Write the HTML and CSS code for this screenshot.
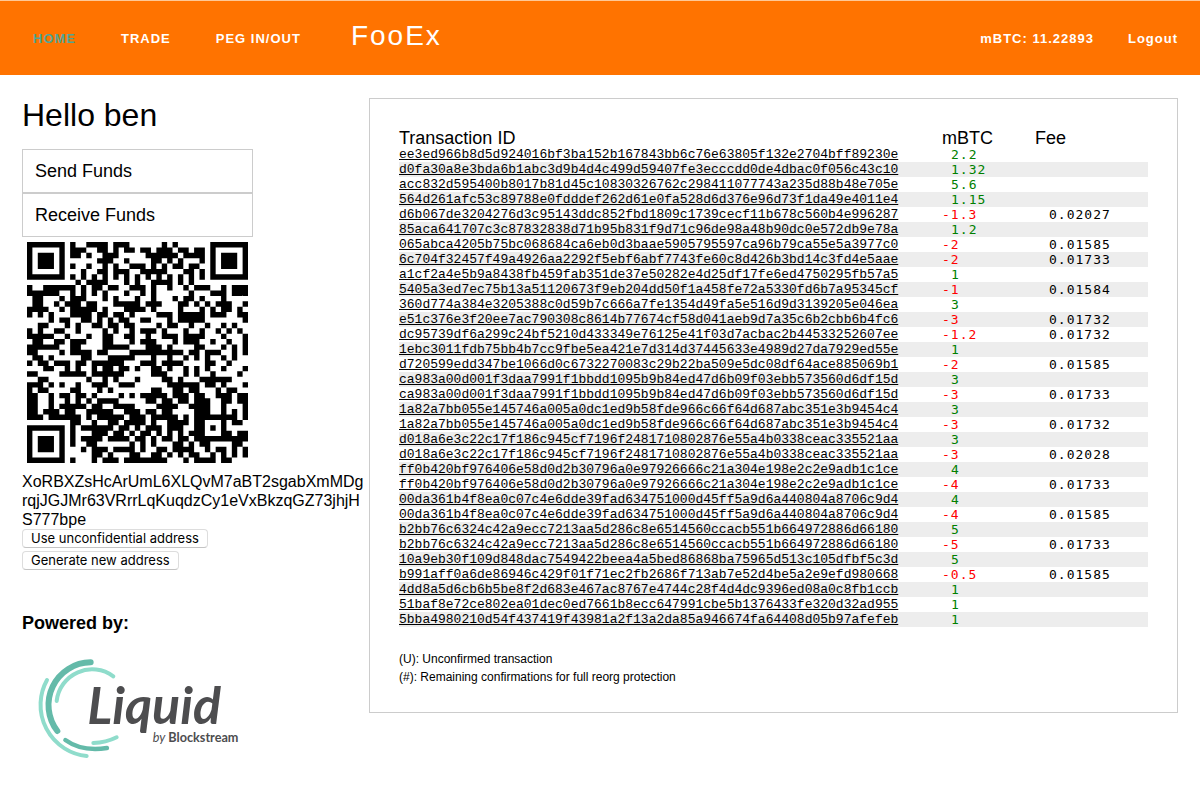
FILE: index.html
```html
<!DOCTYPE html>
<html lang="en">
<head>
    <meta charset="UTF-8">
    <meta name="viewport" content="width=device-width, initial-scale=1.0">
    <title>FooEx</title>
    <link rel="stylesheet" href="styles.css">
</head>
<body>

<header class="topbar">
    <nav class="menu">
        <a class="active" href="#">HOME</a>
        <a href="#">TRADE</a>
        <a href="#">PEG IN/OUT</a>
    </nav>
    <div class="brand">FooEx</div>
    <div class="account">
        <span>mBTC: 11.22893</span>
        <a href="#">Logout</a>
    </div>
</header>

<main class="content">
    <section class="wallet">
        <h1>Hello ben</h1>
        <div class="actions">
            <a href="#">Send Funds</a>
            <a href="#">Receive Funds</a>
        </div>

        <svg class="qr" viewBox="0 0 41 41" role="img" aria-label="Address QR code"><path id="qr-modules"></path></svg>
        <div class="address" id="address">XoRBXZsHcArUmL6XLQvM7aBT2sgabXmMDg<wbr>rqjJGJMr63VRrrLqKuqdzCy1eVxBkzqGZ73jhjH<wbr>S777bpe</div>
        <div class="address-buttons">
            <button type="button">Use unconfidential address</button>
            <button type="button">Generate new address</button>
        </div>

        <h2>Powered by:</h2>
        <svg class="liquid" viewBox="66 570 660 320" role="img" aria-label="Liquid by Blockstream">
            <g fill="none" stroke-linecap="round">
                <g stroke="#8fdccb" stroke-width="12">
                    <path d="M141 645A154 154 0 0 0 260 873"/>
                    <path d="M170 708A107 107 0 0 1 340 634"/>
                    <path d="M280 834Q318 833 350 817"/>
                </g>
                <g stroke="#64baa9" stroke-width="18">
                    <path d="M272 592A128 128 0 0 0 172 798"/>
                    <path d="M196 825Q246 861 321 849" stroke-width="13"/>
                </g>
            </g>
            <text class="liquid-name" x="262" y="777">Liquid</text>
            <text class="liquid-by" x="458" y="830"><tspan class="by">by</tspan> Blockstream</text>
        </svg>
    </section>

    <section class="history">
        <table>
            <thead>
                <tr><th>Transaction ID</th><th class="amount-col">mBTC</th><th class="fee-col">Fee</th></tr>
            </thead>
            <tbody>
                <tr><td class="txid"><a href="#">ee3ed966b8d5d924016bf3ba152b167843bb6c76e63805f132e2704bff89230e</a></td><td class="in">2.2</td><td></td></tr>
                <tr><td class="txid"><a href="#">d0fa30a8e3bda6b1abc3d9b4d4c499d59407fe3ecccdd0de4dbac0f056c43c10</a></td><td class="in">1.32</td><td></td></tr>
                <tr><td class="txid"><a href="#">acc832d595400b8017b81d45c10830326762c298411077743a235d88b48e705e</a></td><td class="in">5.6</td><td></td></tr>
                <tr><td class="txid"><a href="#">564d261afc53c89788e0fdddef262d61e0fa528d6d376e96d73f1da49e4011e4</a></td><td class="in">1.15</td><td></td></tr>
                <tr><td class="txid"><a href="#">d6b067de3204276d3c95143ddc852fbd1809c1739cecf11b678c560b4e996287</a></td><td class="out">-1.3</td><td class="fee">0.02027</td></tr>
                <tr><td class="txid"><a href="#">85aca641707c3c87832838d71b95b831f9d71c96de98a48b90dc0e572db9e78a</a></td><td class="in">1.2</td><td></td></tr>
                <tr><td class="txid"><a href="#">065abca4205b75bc068684ca6eb0d3baae5905795597ca96b79ca55e5a3977c0</a></td><td class="out">-2</td><td class="fee">0.01585</td></tr>
                <tr><td class="txid"><a href="#">6c704f32457f49a4926aa2292f5ebf6abf7743fe60c8d426b3bd14c3fd4e5aae</a></td><td class="out">-2</td><td class="fee">0.01733</td></tr>
                <tr><td class="txid"><a href="#">a1cf2a4e5b9a8438fb459fab351de37e50282e4d25df17fe6ed4750295fb57a5</a></td><td class="in">1</td><td></td></tr>
                <tr><td class="txid"><a href="#">5405a3ed7ec75b13a51120673f9eb204dd50f1a458fe72a5330fd6b7a95345cf</a></td><td class="out">-1</td><td class="fee">0.01584</td></tr>
                <tr><td class="txid"><a href="#">360d774a384e3205388c0d59b7c666a7fe1354d49fa5e516d9d3139205e046ea</a></td><td class="in">3</td><td></td></tr>
                <tr><td class="txid"><a href="#">e51c376e3f20ee7ac790308c8614b77674cf58d041aeb9d7a35c6b2cbb6b4fc6</a></td><td class="out">-3</td><td class="fee">0.01732</td></tr>
                <tr><td class="txid"><a href="#">dc95739df6a299c24bf5210d433349e76125e41f03d7acbac2b44533252607ee</a></td><td class="out">-1.2</td><td class="fee">0.01732</td></tr>
                <tr><td class="txid"><a href="#">1ebc3011fdb75bb4b7cc9fbe5ea421e7d314d37445633e4989d27da7929ed55e</a></td><td class="in">1</td><td></td></tr>
                <tr><td class="txid"><a href="#">d720599edd347be1066d0c6732270083c29b22ba509e5dc08df64ace885069b1</a></td><td class="out">-2</td><td class="fee">0.01585</td></tr>
                <tr><td class="txid"><a href="#">ca983a00d001f3daa7991f1bbdd1095b9b84ed47d6b09f03ebb573560d6df15d</a></td><td class="in">3</td><td></td></tr>
                <tr><td class="txid"><a href="#">ca983a00d001f3daa7991f1bbdd1095b9b84ed47d6b09f03ebb573560d6df15d</a></td><td class="out">-3</td><td class="fee">0.01733</td></tr>
                <tr><td class="txid"><a href="#">1a82a7bb055e145746a005a0dc1ed9b58fde966c66f64d687abc351e3b9454c4</a></td><td class="in">3</td><td></td></tr>
                <tr><td class="txid"><a href="#">1a82a7bb055e145746a005a0dc1ed9b58fde966c66f64d687abc351e3b9454c4</a></td><td class="out">-3</td><td class="fee">0.01732</td></tr>
                <tr><td class="txid"><a href="#">d018a6e3c22c17f186c945cf7196f2481710802876e55a4b0338ceac335521aa</a></td><td class="in">3</td><td></td></tr>
                <tr><td class="txid"><a href="#">d018a6e3c22c17f186c945cf7196f2481710802876e55a4b0338ceac335521aa</a></td><td class="out">-3</td><td class="fee">0.02028</td></tr>
                <tr><td class="txid"><a href="#">ff0b420bf976406e58d0d2b30796a0e97926666c21a304e198e2c2e9adb1c1ce</a></td><td class="in">4</td><td></td></tr>
                <tr><td class="txid"><a href="#">ff0b420bf976406e58d0d2b30796a0e97926666c21a304e198e2c2e9adb1c1ce</a></td><td class="out">-4</td><td class="fee">0.01733</td></tr>
                <tr><td class="txid"><a href="#">00da361b4f8ea0c07c4e6dde39fad634751000d45ff5a9d6a440804a8706c9d4</a></td><td class="in">4</td><td></td></tr>
                <tr><td class="txid"><a href="#">00da361b4f8ea0c07c4e6dde39fad634751000d45ff5a9d6a440804a8706c9d4</a></td><td class="out">-4</td><td class="fee">0.01585</td></tr>
                <tr><td class="txid"><a href="#">b2bb76c6324c42a9ecc7213aa5d286c8e6514560ccacb551b664972886d66180</a></td><td class="in">5</td><td></td></tr>
                <tr><td class="txid"><a href="#">b2bb76c6324c42a9ecc7213aa5d286c8e6514560ccacb551b664972886d66180</a></td><td class="out">-5</td><td class="fee">0.01733</td></tr>
                <tr><td class="txid"><a href="#">10a9eb30f109d848dac7549422beea4a5bed86868ba75965d513c105dfbf5c3d</a></td><td class="in">5</td><td></td></tr>
                <tr><td class="txid"><a href="#">b991aff0a6de86946c429f01f71ec2fb2686f713ab7e52d4be5a2e9efd980668</a></td><td class="out">-0.5</td><td class="fee">0.01585</td></tr>
                <tr><td class="txid"><a href="#">4dd8a5d6cb6b5be8f2d683e467ac8767e4744c28f4d4dc9396ed08a0c8fb1ccb</a></td><td class="in">1</td><td></td></tr>
                <tr><td class="txid"><a href="#">51baf8e72ce802ea01dec0ed7661b8ecc647991cbe5b1376433fe320d32ad955</a></td><td class="in">1</td><td></td></tr>
                <tr><td class="txid"><a href="#">5bba4980210d54f437419f43981a2f13a2da85a946674fa64408d05b97afefeb</a></td><td class="in">1</td><td></td></tr>
            </tbody>
        </table>
        <div class="legend">
            <p>(U): Unconfirmed transaction</p>
            <p>(#): Remaining confirmations for full reorg protection</p>
        </div>
    </section>
</main>

<script src="qr.js"></script>
</body>
</html>
```
FILE: styles.css
```css
* {
    box-sizing: border-box;
}
body {
    margin: 0;
    background-color: #fff;
    color: #000;
    font-family: "Liberation Sans", Arial, sans-serif;
    font-size: 16px;
}
a {
    color: inherit;
    text-decoration: none;
}
h1, h2, p {
    margin: 0;
    font-weight: normal;
}
.topbar {
    display: flex;
    align-items: center;
    height: 75px;
    padding: 0 22px 0 33px;
    border-top: 1px solid #ffc896;
    background-color: #ff7300;
    color: #fff;
    font-size: 13px;
    font-weight: bold;
    letter-spacing: 1px;
}
.menu {
    display: flex;
    gap: 45px;
}
.menu .active {
    color: #52a595;
}
.brand {
    margin-left: 50px;
    padding-bottom: 4px;
    font-size: 28px;
    font-weight: normal;
    letter-spacing: 2px;
}
.account {
    display: flex;
    gap: 34px;
    margin-left: auto;
}
.content {
    display: flex;
    align-items: flex-start;
    padding: 23px 22px;
}
.wallet {
    flex: none;
    width: 347px;
}
.wallet h1 {
    margin-bottom: 17px;
    font-size: 32px;
    line-height: 34px;
}
.actions {
    width: 231px;
}
.actions a {
    display: block;
    padding: 0 12px;
    border: 1px solid #ccc;
    font-size: 18px;
    line-height: 42px;
}
.qr {
    display: block;
    width: 221px;
    margin: 5px 5px 9px;
}
.address {
    line-height: 19px;
}
.address-buttons {
    display: flex;
    flex-direction: column;
    align-items: flex-start;
    gap: 3px;
}
.address-buttons button {
    padding: 0 8px;
    border: 1px solid #ddd;
    border-bottom-color: #c4c4c4;
    border-radius: 4px;
    background-color: #fff;
    color: #000;
    font-family: Inter, sans-serif;
    font-size: 13px;
    line-height: 17px;
}
.wallet h2 {
    margin: 43px 0 22px;
    font-size: 18px;
    font-weight: bold;
    line-height: 20px;
}
.liquid {
    display: block;
    width: 220px;
}
.liquid text {
    fill: #4d4d4f;
    font-family: Lato, sans-serif;
    font-weight: bold;
}
.liquid-name {
    font-size: 156px;
    font-style: italic;
}
.liquid .liquid-by {
    font-size: 38px;
}
.by {
    font-style: italic;
    font-weight: normal;
}
.history {
    flex: 1;
    padding: 30px 29px 26px;
    border: 1px solid #ccc;
}
.history table {
    width: 100%;
    table-layout: fixed;
    border-collapse: collapse;
}
.history th {
    padding: 0;
    font-size: 18px;
    font-weight: normal;
    line-height: 18px;
    text-align: left;
}
.amount-col {
    width: 93px;
}
.fee-col {
    width: 113px;
}
.history td {
    height: 15px;
    padding: 0;
    font-family: "DejaVu Sans Mono", monospace;
    font-size: 13px;
    line-height: 15px;
    letter-spacing: 1px;
    vertical-align: top;
}
.history tbody tr:nth-child(even) {
    background-color: #ededed;
}
.history .txid {
    font-family: "Liberation Mono", monospace;
    letter-spacing: normal;
}
.txid a {
    text-decoration: underline;
}
.history .in {
    padding-left: 9px;
    color: #008000;
}
.history .out {
    color: #f00;
}
.history .fee {
    padding-left: 14px;
}
.legend {
    margin-top: 23px;
    font-size: 12px;
    line-height: 18px;
}
```
FILE: qr.js
```js
// QR code version 6, level M: 4 blocks of 27 data + 16 check bytes
const SIZE = 41;
const BLOCKS = 4;
const DATA_LEN = 27;
const CHECK_LEN = 16;
const FORMAT_BITS = 0b100111110010111; // level M, mask 6

function gfMul(x, y) {
    let z = 0;
    for (let i = 7; i >= 0; i--) {
        z = (z << 1) ^ ((z >>> 7) * 0x11d);
        z ^= ((y >>> i) & 1) * x;
    }
    return z;
}

function makeDivisor(degree) {
    const result = new Array(degree).fill(0);
    result[degree - 1] = 1;
    let root = 1;
    for (let i = 0; i < degree; i++) {
        for (let j = 0; j < degree; j++) {
            result[j] = gfMul(result[j], root);
            if (j + 1 < degree) result[j] ^= result[j + 1];
        }
        root = gfMul(root, 2);
    }
    return result;
}

function checkBytes(data, divisor) {
    const result = divisor.map(() => 0);
    data.forEach(b => {
        const factor = b ^ result.shift();
        result.push(0);
        divisor.forEach((d, i) => result[i] ^= gfMul(d, factor));
    });
    return result;
}

function makeCodewords(text) {
    let bits = '0100' + text.length.toString(2).padStart(8, '0');
    for (const ch of text) {
        bits += ch.charCodeAt(0).toString(2).padStart(8, '0');
    }
    bits += '0000';
    const data = bits.match(/.{8}/g).map(b => parseInt(b, 2));
    for (let pad = 0xec; data.length < BLOCKS * DATA_LEN; pad ^= 0xec ^ 0x11) {
        data.push(pad);
    }

    const divisor = makeDivisor(CHECK_LEN);
    const blocks = [];
    for (let i = 0; i < BLOCKS; i++) {
        const part = data.slice(i * DATA_LEN, (i + 1) * DATA_LEN);
        blocks.push(part.concat(checkBytes(part, divisor)));
    }
    const result = [];
    for (let i = 0; i < DATA_LEN + CHECK_LEN; i++) {
        blocks.forEach(block => result.push(block[i]));
    }
    return result;
}

function makeQr(text) {
    const grid = Array.from({ length: SIZE }, () => new Array(SIZE).fill(null));

    function set(x, y, dark) {
        if (x >= 0 && x < SIZE && y >= 0 && y < SIZE) grid[y][x] = Boolean(dark);
    }

    // timing lines
    for (let i = 0; i < SIZE; i++) {
        set(6, i, i % 2 === 0);
        set(i, 6, i % 2 === 0);
    }
    // corner squares
    [[3, 3], [SIZE - 4, 3], [3, SIZE - 4]].forEach(([cx, cy]) => {
        for (let dy = -4; dy <= 4; dy++) {
            for (let dx = -4; dx <= 4; dx++) {
                const dist = Math.max(Math.abs(dx), Math.abs(dy));
                set(cx + dx, cy + dy, dist !== 2 && dist !== 4);
            }
        }
    });
    // alignment square
    for (let dy = -2; dy <= 2; dy++) {
        for (let dx = -2; dx <= 2; dx++) {
            set(34 + dx, 34 + dy, Math.max(Math.abs(dx), Math.abs(dy)) !== 1);
        }
    }
    // format bits
    const bit = i => (FORMAT_BITS >>> i) & 1;
    for (let i = 0; i <= 5; i++) set(8, i, bit(i));
    set(8, 7, bit(6));
    set(8, 8, bit(7));
    set(7, 8, bit(8));
    for (let i = 9; i < 15; i++) set(14 - i, 8, bit(i));
    for (let i = 0; i < 8; i++) set(SIZE - 1 - i, 8, bit(i));
    for (let i = 8; i < 15; i++) set(8, SIZE - 15 + i, bit(i));
    set(8, SIZE - 8, true);

    // data, in column pairs from the bottom right
    const words = makeCodewords(text);
    let n = 0;
    let up = true;
    for (let right = SIZE - 1; right >= 1; right -= 2) {
        if (right === 6) right = 5;
        for (let step = 0; step < SIZE; step++) {
            const y = up ? SIZE - 1 - step : step;
            for (let x = right; x > right - 2; x--) {
                if (grid[y][x] !== null) continue;
                const value = n < words.length * 8 ? (words[n >>> 3] >>> (7 - (n & 7))) & 1 : 0;
                const flip = ((x * y) % 2 + (x * y) % 3) % 2 === 0;
                grid[y][x] = Boolean(value) !== flip;
                n++;
            }
        }
        up = !up;
    }
    return grid;
}

const address = document.getElementById('address').textContent.trim();
let path = '';
makeQr('bitcoin:' + address).forEach((row, y) => {
    row.forEach((dark, x) => {
        if (dark) path += `M${x} ${y}h1v1h-1z`;
    });
});
document.getElementById('qr-modules').setAttribute('d', path);
```
